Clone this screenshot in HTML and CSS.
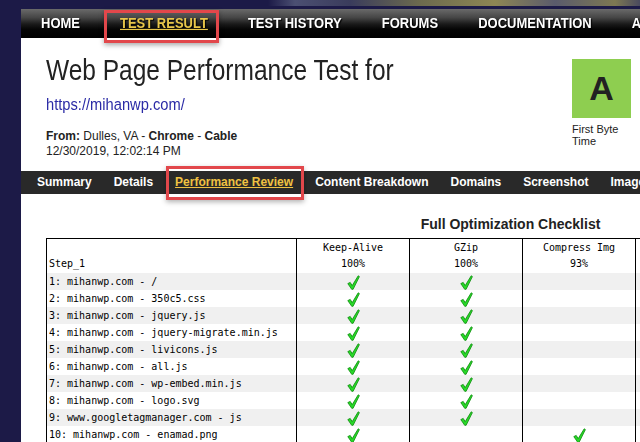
FILE: index.html
```html
<!DOCTYPE html>
<html>
<head>
<meta charset="utf-8">
<title>Web Page Performance Test</title>
<link rel="stylesheet" href="styles.css">
</head>
<body>
<svg class="defs" width="0" height="0" aria-hidden="true">
  <symbol id="chk" viewBox="0 0 13 15">
    <path d="M0.8 8.6 L3.2 7.4 L5.2 10.6 L11.2 0.8 L12.4 1.6 L6.1 14.3 L4.7 14.3 Z" fill="#27d927" stroke="#0d8a0d" stroke-width="0.8" stroke-linejoin="round"/>
  </symbol>
</svg>
<div class="banner"></div>
<div class="page">
  <nav class="mainnav">
    <a class="mn-item"><span class="tall">HOME</span></a>
    <a class="mn-item active marked"><span class="tall">TEST RESULT</span></a>
    <a class="mn-item"><span class="tall">TEST HISTORY</span></a>
    <a class="mn-item"><span class="tall">FORUMS</span></a>
    <a class="mn-item"><span class="tall">DOCUMENTATION</span></a>
    <a class="mn-item"><span class="tall">ABOUT</span></a>
  </nav>

  <div class="header">
    <div class="info">
      <h1 class="title"><span class="tall">Web Page Performance Test for</span></h1>
      <div class="url"><a class="tall">https://mihanwp.com/</a></div>
      <div class="meta"><b>From:</b> Dulles, VA - <b>Chrome</b> - <b>Cable</b><br>12/30/2019, 12:02:14 PM</div>
    </div>
    <div class="grade">
      <div class="grade-box">A</div>
      <div class="grade-label">First Byte Time</div>
    </div>
  </div>

  <nav class="subnav">
    <a class="sn-item">Summary</a>
    <a class="sn-item">Details</a>
    <a class="sn-item active marked">Performance Review</a>
    <a class="sn-item">Content Breakdown</a>
    <a class="sn-item">Domains</a>
    <a class="sn-item">Screenshot</a>
    <a class="sn-item">Image Analysis</a>
    <a class="sn-item">Request Map</a>
  </nav>

  <div class="checklist">
    <div class="caption">Full Optimization Checklist</div>
    <table class="grid">
      <colgroup>
        <col class="c-first">
        <col class="c-metric"><col class="c-metric"><col class="c-metric">
        <col class="c-metric"><col class="c-metric"><col class="c-metric">
      </colgroup>
      <thead>
        <tr>
          <th class="step">Step_1</th>
          <th>Keep-Alive<br>100%</th>
          <th>GZip<br>100%</th>
          <th>Compress Img<br>93%</th>
          <th>Progressive JPEGs<br>100%</th>
          <th>Cache Static<br>0%</th>
          <th>CDN Detected<br>0%</th>
        </tr>
      </thead>
      <tbody>
        <tr class="odd"><td>1: mihanwp.com - /</td><td class="c"><svg class="chk"><use href="#chk"/></svg></td><td class="c"><svg class="chk"><use href="#chk"/></svg></td><td></td><td></td><td></td><td></td></tr>
        <tr><td>2: mihanwp.com - 350c5.css</td><td class="c"><svg class="chk"><use href="#chk"/></svg></td><td class="c"><svg class="chk"><use href="#chk"/></svg></td><td></td><td></td><td></td><td></td></tr>
        <tr class="odd"><td>3: mihanwp.com - jquery.js</td><td class="c"><svg class="chk"><use href="#chk"/></svg></td><td class="c"><svg class="chk"><use href="#chk"/></svg></td><td></td><td></td><td></td><td></td></tr>
        <tr><td>4: mihanwp.com - jquery-migrate.min.js</td><td class="c"><svg class="chk"><use href="#chk"/></svg></td><td class="c"><svg class="chk"><use href="#chk"/></svg></td><td></td><td></td><td></td><td></td></tr>
        <tr class="odd"><td>5: mihanwp.com - livicons.js</td><td class="c"><svg class="chk"><use href="#chk"/></svg></td><td class="c"><svg class="chk"><use href="#chk"/></svg></td><td></td><td></td><td></td><td></td></tr>
        <tr><td>6: mihanwp.com - all.js</td><td class="c"><svg class="chk"><use href="#chk"/></svg></td><td class="c"><svg class="chk"><use href="#chk"/></svg></td><td></td><td></td><td></td><td></td></tr>
        <tr class="odd"><td>7: mihanwp.com - wp-embed.min.js</td><td class="c"><svg class="chk"><use href="#chk"/></svg></td><td class="c"><svg class="chk"><use href="#chk"/></svg></td><td></td><td></td><td></td><td></td></tr>
        <tr><td>8: mihanwp.com - logo.svg</td><td class="c"><svg class="chk"><use href="#chk"/></svg></td><td class="c"><svg class="chk"><use href="#chk"/></svg></td><td></td><td></td><td></td><td></td></tr>
        <tr class="odd"><td>9: www.googletagmanager.com - js</td><td class="c"><svg class="chk"><use href="#chk"/></svg></td><td class="c"><svg class="chk"><use href="#chk"/></svg></td><td></td><td></td><td></td><td></td></tr>
        <tr><td>10: mihanwp.com - enamad.png</td><td class="c"><svg class="chk"><use href="#chk"/></svg></td><td></td><td class="c"><svg class="chk"><use href="#chk"/></svg></td><td></td><td></td><td></td></tr>
      </tbody>
    </table>
  </div>
</div>
</body>
</html>
```

FILE: styles.css
```css
html, body {
  margin: 0;
  padding: 0;
  overflow: hidden;
}

body {
  width: 640px;
  height: 442px;
  background: #1c1a47;
  font-family: "Liberation Sans", Arial, sans-serif;
  color: #222;
}

.defs {
  position: absolute;
  width: 0;
  height: 0;
}

.banner {
  height: 6px;
  border-bottom: 3px solid #1c1a47;
  background: linear-gradient(90deg, #1c1a47 0, #1c1a47 268px, #4b4f72 295px, #3a3c5c 350px, #6c6a4e 420px, #8d8654 495px, #5a5b6c 555px, #7d7852 615px, #4a4a5e 640px);
}

.page {
  margin-left: 21px;
  width: 1000px;
  min-height: 600px;
  background: #fff;
}

/* main navigation */
.mainnav {
  display: flex;
  height: 29px;
  background: linear-gradient(#6a6a6a 0, #454545 30%, #1a1a1a 52%, #050505 70%, #000 100%);
}

.mn-item {
  position: relative;
  padding: 0 20px;
  font-size: 13px;
  font-weight: bold;
  line-height: 27px;
  color: #fff;
  white-space: nowrap;
  text-shadow: 1px 1px 1px #000;
}

.tall {
  display: inline-block;
  transform: scaleY(1.16);
}

.mn-item.active {
  color: #e8c64a;
}

.mn-item.active .tall {
  text-decoration: underline;
}

.mn-item.marked::after {
  content: "";
  position: absolute;
  left: 4px;
  right: 9px;
  top: 1px;
  bottom: -5px;
  border: 3px solid #e2474b;
  box-shadow: 0 2px 5px rgba(0, 0, 0, 0.35);
}

/* header */
.header {
  display: flex;
  justify-content: space-between;
  width: 585px;
  padding: 18px 9px 0 25px;
}

.title {
  margin: 0;
  font-size: 24.5px;
  font-weight: normal;
  line-height: 30px;
  white-space: nowrap;
  color: #222;
}

.title .tall {
  transform: scaleY(1.18);
}

.url {
  margin-top: 9px;
  font-size: 14.7px;
  line-height: 18px;
}

.url a {
  color: #2b2ba6;
  transform: scaleY(1.17);
}

.meta {
  margin-top: 16px;
  font-size: 12px;
  line-height: 15px;
  color: #222;
}

.grade {
  margin-top: 3px;
  width: 59px;
}

.grade-box {
  width: 59px;
  height: 59px;
  background: #8ece50;
  font-size: 34px;
  font-weight: bold;
  line-height: 59px;
  text-align: center;
  color: #222;
}

.grade-label {
  margin-top: 5px;
  font-size: 11px;
  line-height: 12px;
  color: #222;
}

/* sub navigation */
.subnav {
  display: flex;
  margin-top: 12px;
  height: 23px;
  padding-left: 5px;
  background: #292929;
}

.sn-item {
  position: relative;
  padding: 0 11px;
  font-size: 12px;
  font-weight: bold;
  line-height: 23px;
  color: #fff;
  white-space: nowrap;
}

.sn-item.active {
  color: #f0c242;
  text-decoration: underline;
}

.sn-item.marked::after {
  content: "";
  position: absolute;
  left: 2px;
  right: 0;
  top: -5px;
  bottom: -6px;
  border: 3px solid #e2474b;
  box-shadow: 0 2px 5px rgba(0, 0, 0, 0.3);
}

/* checklist */
.checklist {
  padding-left: 25px;
  width: 929px;
}

.caption {
  margin-top: 22px;
  font-size: 14px;
  font-weight: bold;
  line-height: 17px;
  text-align: center;
  color: #222;
}

.grid {
  margin-top: 5px;
  width: 929px;
  table-layout: fixed;
  border-collapse: collapse;
  border: 1px solid #000;
  font-family: "DejaVu Sans Mono", "Liberation Mono", monospace;
  font-size: 10px;
  color: #000;
}

.c-first {
  width: 250px;
}

.c-metric {
  width: 113px;
}

.grid th {
  padding: 1px 0;
  font-weight: normal;
  line-height: 16px;
  text-align: center;
  vertical-align: top;
  border-left: 1px solid #000;
  border-right: 1px solid #000;
  white-space: nowrap;
}

.grid th.step {
  padding-left: 2px;
  text-align: left;
  vertical-align: bottom;
}

.grid td {
  height: 17px;
  padding: 0 2px;
  line-height: 17px;
  border-left: 1px solid #000;
  border-right: 1px solid #000;
  white-space: nowrap;
  overflow: hidden;
}

.grid td.c {
  padding: 0;
  vertical-align: top;
}

.grid tr.odd td {
  background: #f0f0f0;
}

.chk {
  display: block;
  width: 13px;
  height: 15px;
  margin: 2px auto 0;
}
```
